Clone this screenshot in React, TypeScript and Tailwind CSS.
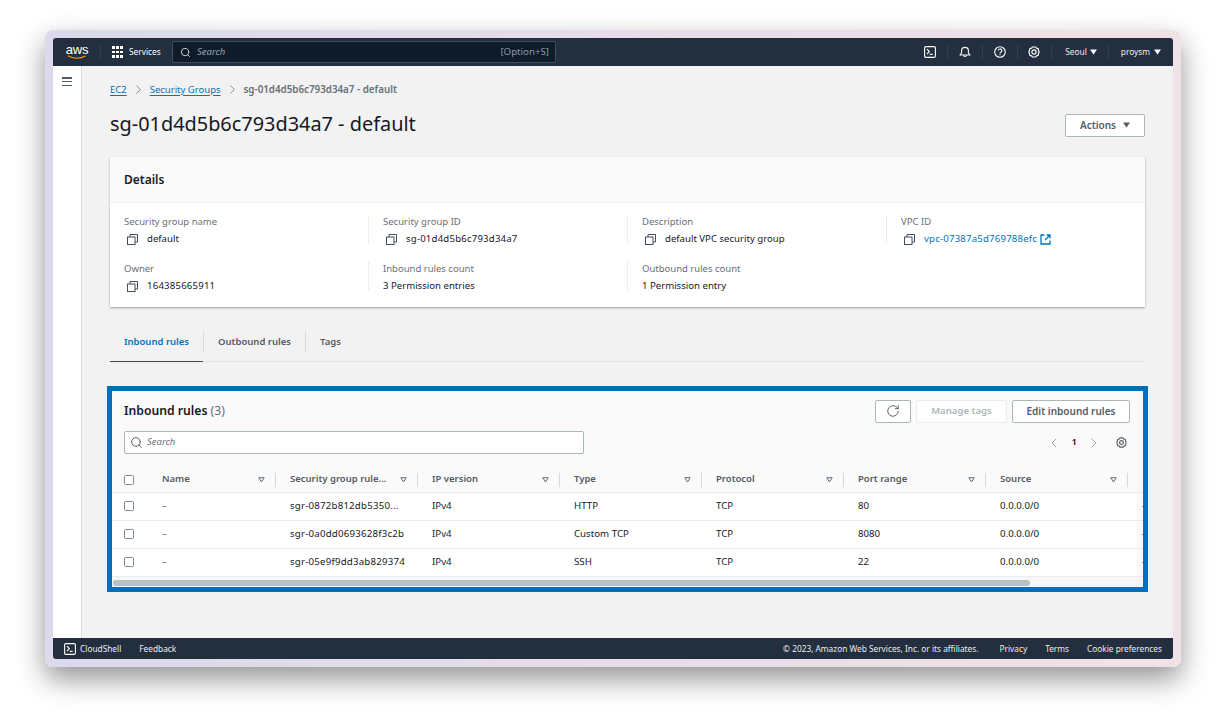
import { ChevronLeft, ChevronRight, RotateCw, Search } from 'lucide-react';

const detailsRows = [
  [
    { label: 'Security group name', value: 'default', copy: true },
    { label: 'Security group ID', value: 'sg-01d4d5b6c793d34a7', copy: true, id: true },
    { label: 'Description', value: 'default VPC security group', copy: true },
    { label: 'VPC ID', value: 'vpc-07387a5d769788efc', copy: true, link: true, id: true },
  ],
  [
    { label: 'Owner', value: '164385665911', copy: true, id: true },
    { label: 'Inbound rules count', value: '3 Permission entries' },
    { label: 'Outbound rules count', value: '1 Permission entry' },
  ],
];

const columns = ['Security group rule...', 'IP version', 'Type', 'Protocol', 'Port range', 'Source'];

const rules = [
  ['sgr-0872b812db5350...', 'IPv4', 'HTTP', 'TCP', '80', '0.0.0.0/0'],
  ['sgr-0a0dd0693628f3c2b', 'IPv4', 'Custom TCP', 'TCP', '8080', '0.0.0.0/0'],
  ['sgr-05e9f9dd3ab829374', 'IPv4', 'SSH', 'TCP', '22', '0.0.0.0/0'],
];

function CopyIcon() {
  return (
    <svg width="11" height="11" viewBox="0 0 11 11" fill="none" stroke="#414d5c" strokeWidth="1" className="shrink-0">
      <rect x="0.5" y="3" width="7.5" height="7.5" />
      <path d="M3 3V0.5H10.5V8H8" />
    </svg>
  );
}

function GearIcon({ color, size }: { color: string; size: number }) {
  return (
    <svg width={size} height={size} viewBox="0 0 12 12" fill="none" stroke={color} strokeWidth="1.2">
      <path d="M4.4 1 H7.6 L8.4 2.1 L10.1 2.6 L11 6 L10.1 9.4 L8.4 9.9 L7.6 11 H4.4 L3.6 9.9 L1.9 9.4 L1 6 L1.9 2.6 L3.6 2.1 Z" strokeLinejoin="round" />
      <circle cx="6" cy="6" r="2.1" />
    </svg>
  );
}

function TerminalIcon() {
  return (
    <svg width="12" height="12" viewBox="0 0 12 12" fill="none" stroke="#ffffff" strokeWidth="1.1">
      <rect x="0.6" y="0.6" width="10.8" height="10.8" rx="1.4" />
      <path d="M3 3.2 L5.4 5.6 L3 8" />
      <path d="M5.8 8.4 H8.6" />
    </svg>
  );
}

function Caret({ color = '#ffffff' }: { color?: string }) {
  return (
    <svg width="7" height="6" viewBox="0 0 7 6" fill={color}>
      <path d="M0 0.5H7L3.5 5.5Z" />
    </svg>
  );
}

function SortIcon() {
  return (
    <svg width="7" height="6" viewBox="0 0 7 6" fill="none" stroke="#5f6b7a" strokeWidth="1">
      <path d="M0.8 0.7H6.2L3.5 5Z" />
    </svg>
  );
}

function Checkbox() {
  return <span className="block h-[10px] w-[10px] rounded-[1.5px] border border-[#7d8998] bg-white" />;
}

function NavDivider() {
  return <span className="h-[16px] w-px bg-[#2f3d4d]" />;
}

export default function App() {
  return (
    <div className="h-[726px] w-[1226px] overflow-hidden bg-white pl-[45px] pt-[30px] font-['Noto_Sans','Liberation_Sans',sans-serif] text-[#16191f]">
      <div className="h-[637px] w-[1136px] rounded-[8px] bg-gradient-to-r from-[#dcd9ec] to-[#f1e2e5] p-2 shadow-[0_12px_28px_rgba(0,0,0,0.42)]">
        <div className="flex h-[621px] w-[1120px] flex-col overflow-hidden rounded-[3px] bg-[#f2f2f2]">
          {/* Top nav */}
          <header className="flex h-[28px] shrink-0 items-center bg-[#232f3e] text-white">
            <div className="flex w-[47px] shrink-0 flex-col items-center pl-[1px]">
              <span className="font-['Liberation_Sans',sans-serif] text-[13px] leading-[11px] tracking-[-0.2px]">aws</span>
              <svg width="20" height="5" viewBox="0 0 20 5" fill="none">
                <path d="M1 0.8 C6 4 13 4 18.5 1" stroke="#ff9900" strokeWidth="1.1" />
              </svg>
            </div>
            <span className="h-[16px] w-px bg-[#2f3d4d]" />
            <div className="ml-[11px] grid w-[11px] shrink-0 grid-cols-3 gap-[1.5px]">
              {Array.from({ length: 9 }).map((_, i) => (
                <span key={i} className="h-[2.7px] w-[2.7px] bg-white" />
              ))}
            </div>
            <span className="ml-[6px] w-[34px] whitespace-nowrap text-[8.3px]">Services</span>
            <div className="ml-[9px] flex h-[22px] w-[384px] items-center rounded-[2px] border border-[#414d5c] bg-[#0f1b2a] pl-[7px] pr-[6px]">
              <Search size={11} strokeWidth={2} className="text-[#d5dbdb]" />
              <span className="ml-[6px] flex-1 text-[9.5px] italic text-[#95a5b5]">Search</span>
              <span className="text-[9.7px] text-[#8d99a8]">[Option+S]</span>
            </div>
            <div className="ml-auto flex items-center">
              <TerminalIcon />
              <span className="ml-[11px]" />
              <NavDivider />
              <svg width="12" height="12" viewBox="0 0 12 12" fill="none" stroke="#ffffff" strokeWidth="1.1" className="ml-[11px]">
                <path d="M1 9 H11 L9.4 6.8 V4.8 A3.4 3.4 0 0 0 2.6 4.8 V6.8 Z" strokeLinejoin="round" />
                <path d="M4.4 9.4 A1.7 1.7 0 0 0 7.6 9.4" />
              </svg>
              <span className="ml-[11px]" />
              <NavDivider />
              <svg width="12" height="12" viewBox="0 0 12 12" fill="none" stroke="#ffffff" strokeWidth="1.1" className="ml-[11px]">
                <circle cx="6" cy="6" r="5.3" />
                <path d="M4.3 4.6 A1.8 1.7 0 1 1 6.8 6.2 Q6 6.6 6 7.4" />
                <path d="M6 8.2 V9.3" />
              </svg>
              <span className="ml-[11px]" />
              <NavDivider />
              <span className="ml-[10px]">
                <GearIcon color="#ffffff" size={12} />
              </span>
              <span className="ml-[11px]" />
              <NavDivider />
              <span className="ml-[13px] text-[8.3px] text-[#eaeded]">Seoul</span>
              <span className="ml-[3px]">
                <Caret />
              </span>
              <span className="ml-[11px]" />
              <NavDivider />
              <span className="ml-[12px] text-[8.3px] text-[#eaeded]">proysm</span>
              <span className="ml-[4px] mr-[12px]">
                <Caret />
              </span>
            </div>
          </header>

          <div className="flex min-h-0 flex-1">
            {/* Collapsed side nav */}
            <aside className="flex w-[29px] shrink-0 justify-center border-r border-[#d5dbdb] bg-white pt-[11px]">
              <div className="flex h-[9px] w-[10px] flex-col justify-between">
                <span className="h-[1.5px] bg-[#545b64]" />
                <span className="h-[1.5px] bg-[#545b64]" />
                <span className="h-[1.5px] bg-[#545b64]" />
              </div>
            </aside>

            <main className="min-w-0 flex-1 pl-[28px] pr-[28px]">
              {/* Breadcrumbs */}
              <nav className="mt-[17px] flex h-[13px] items-center text-[9.5px] leading-none">
                <span className="text-[#0073bb] underline underline-offset-2">EC2</span>
                <ChevronRight size={15} strokeWidth={1.2} className="mx-[4px] text-[#687078]" />
                <span className="text-[#0073bb] underline underline-offset-2">Security Groups</span>
                <ChevronRight size={15} strokeWidth={1.2} className="mx-[4px] text-[#687078]" />
                <span className="text-[9.8px] font-semibold text-[#687078]">sg-01d4d5b6c793d34a7 - default</span>
              </nav>

              {/* Page title */}
              <div className="mt-[10px] flex h-[36px] items-center justify-between">
                <h1 className="text-[19.9px] font-normal leading-none">sg-01d4d5b6c793d34a7 - default</h1>
                <button className="mt-[2px] flex h-[23px] w-[80px] items-center justify-center gap-[7px] rounded-[2px] border border-[#aab7b8] bg-white text-[10px] font-semibold text-[#545b64]">
                  Actions
                  <Caret color="#545b64" />
                </button>
              </div>

              {/* Details card */}
              <section className="mt-[15px] h-[150px] bg-white shadow-[0_1px_2px_rgba(0,0,0,0.35)]">
                <div className="flex h-[46px] items-center border-b border-[#f2f2f2] bg-[#fafafa] px-[14px]">
                  <h2 className="text-[12px] font-semibold">Details</h2>
                </div>
                <div className="flex flex-col gap-[17px] pl-[14px] pt-[12px]">
                  {detailsRows.map((row, r) => (
                    <div key={r} className="grid h-[30px] grid-cols-[259px_259px_259px_244px]">
                      {row.map((item, i) => (
                        <div key={item.label} className="relative">
                          {i < row.length - 1 && <span className="absolute right-[14px] top-0 h-[28px] w-px bg-[#eaeded]" />}
                          <div className="text-[9.5px] leading-[13px] text-[#687078]">{item.label}</div>
                          <div className="mt-[4px] flex items-center text-[9.6px] leading-[14px]">
                            {item.copy && (
                              <span className="ml-[3px] mr-[9px]">
                                <CopyIcon />
                              </span>
                            )}
                            <span className={`${item.id ? 'tracking-[0.2px]' : ''} ${item.link ? 'text-[#0073bb]' : ''}`}>{item.value}</span>
                            {item.link && (
                              <svg width="11" height="11" viewBox="0 0 11 11" fill="none" stroke="#0073bb" strokeWidth="1.3" className="ml-[3px]">
                                <path d="M4.5 1H1V10H10V6.5" />
                                <path d="M6.5 1H10V4.5M10 1L5 6" />
                              </svg>
                            )}
                          </div>
                        </div>
                      ))}
                    </div>
                  ))}
                </div>
              </section>

              {/* Tabs */}
              <div className="mt-[21px] flex h-[34px] items-start border-b border-[#dfe3e4] text-[9.5px] font-semibold text-[#545b64]">
                <div className="flex h-[34px] w-[93px] items-center justify-center border-b-[1.5px] border-[#414750] pb-[5px] text-[#0073bb]">
                  Inbound rules
                </div>
                <div className="mt-[3px] h-[22px] w-px bg-[#d5dbdb]" />
                <div className="flex h-[28px] w-[101px] items-center justify-center">Outbound rules</div>
                <div className="mt-[3px] h-[22px] w-px bg-[#d5dbdb]" />
                <div className="flex h-[28px] w-[49px] items-center justify-center">Tags</div>
              </div>

              {/* Inbound rules panel */}
              <section className="-mx-[3px] mt-[24px] h-[206px] border-[5px] border-[#006fbb] bg-[#fafafa]">
                <div className="flex h-[196px] flex-col overflow-hidden">
                  <div className="mt-[9px] flex h-[22px] shrink-0 items-center justify-between pl-[12px] pr-[13px]">
                    <h2 className="text-[12.2px] font-semibold">
                      Inbound rules <span className="font-normal text-[#687078]">(3)</span>
                    </h2>
                    <div className="flex items-center gap-[5px]">
                      <button className="flex h-[23px] w-[36px] items-center justify-center rounded-[2px] border border-[#aab7b8] bg-white text-[#545b64]">
                        <RotateCw size={14} strokeWidth={1.6} />
                      </button>
                      <button className="h-[23px] w-[91px] rounded-[2px] border border-[#eaeded] bg-white text-[9.6px] font-semibold text-[#aab7b8]">
                        Manage tags
                      </button>
                      <button className="h-[23px] w-[118px] rounded-[2px] border border-[#aab7b8] bg-white text-[10px] font-semibold text-[#545b64]">
                        Edit inbound rules
                      </button>
                    </div>
                  </div>

                  <div className="mt-[9px] flex h-[23px] shrink-0 items-center justify-between pl-[12px] pr-[16px]">
                    <div className="flex h-[23px] w-[460px] items-center rounded-[2px] border border-[#aab7b8] bg-white pl-[5px]">
                      <Search size={13} strokeWidth={1.8} className="text-[#545b64]" />
                      <span className="ml-[4px] text-[9.5px] italic text-[#687078]">Search</span>
                    </div>
                    <div className="flex items-center">
                      <ChevronLeft size={16} strokeWidth={1.2} className="text-[#879596]" />
                      <span className="ml-[10px] text-[9.5px] font-semibold">1</span>
                      <ChevronRight size={16} strokeWidth={1.2} className="ml-[9px] text-[#879596]" />
                      <span className="ml-[14px]">
                        <GearIcon color="#545b64" size={11} />
                      </span>
                    </div>
                  </div>

                  {/* Table */}
                  <div className="mt-[13px] flex h-[25px] shrink-0 items-center text-[9.5px] font-semibold text-[#545b64]">
                    <div className="flex w-[50px] shrink-0 justify-start pl-[12px]">
                      <Checkbox />
                    </div>
                    <div className="flex h-[14px] w-[114px] shrink-0 items-center justify-between border-r border-[#d5dbdb] pr-[10px]">
                      <span>Name</span>
                      <SortIcon />
                    </div>
                    {columns.map((col) => (
                      <div key={col} className="flex h-[14px] w-[142px] shrink-0 items-center justify-between border-r border-[#d5dbdb] pl-[14px] pr-[10px]">
                        <span className="whitespace-nowrap">{col}</span>
                        <SortIcon />
                      </div>
                    ))}
                  </div>
                  {rules.map((rule, r) => (
                    <div key={r} className="flex h-[28px] shrink-0 items-center border-t border-[#eaeded] bg-white text-[9.7px] text-[#16191f]">
                      <div className="-mt-[2px] flex w-[50px] shrink-0 pl-[12px]">
                        <Checkbox />
                      </div>
                      <div className="w-[114px] shrink-0 text-[#687078]">–</div>
                      {rule.map((cell, c) => (
                        <div key={c} className={`w-[142px] shrink-0 whitespace-nowrap pl-[14px] ${c === 0 ? 'tracking-[0.2px]' : ''}`}>
                          {cell}
                        </div>
                      ))}
                      <span className="ml-[14px] h-px w-[2px] shrink-0 bg-[#687078]" />
                    </div>
                  ))}
                  <div className="flex flex-1 items-start border-t border-[#eaeded] bg-[#f7f7f7] pt-[3px]">
                    <div className="ml-[1px] h-[6px] w-[917px] rounded-full bg-[#bcbfc1]" />
                  </div>
                </div>
              </section>
            </main>
          </div>

          {/* Footer */}
          <footer className="flex h-[21px] shrink-0 items-center bg-[#232f3e] pl-[11px] pr-[11px] pt-px text-[8.3px] text-[#eaeded]">
            <TerminalIcon />
            <span className="ml-[4px]">CloudShell</span>
            <span className="ml-[18px]">Feedback</span>
            <span className="ml-auto">© 2023, Amazon Web Services, Inc. or its affiliates.</span>
            <span className="ml-[21px]">Privacy</span>
            <span className="ml-[18px]">Terms</span>
            <span className="ml-[18px]">Cookie preferences</span>
          </footer>
        </div>
      </div>
    </div>
  );
}
